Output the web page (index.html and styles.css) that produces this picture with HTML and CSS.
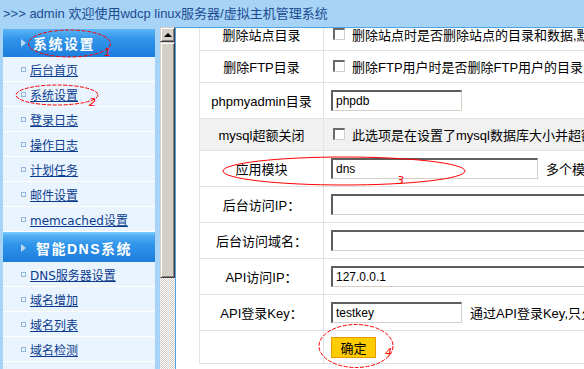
FILE: index.html
```html
<!DOCTYPE html>
<html lang="zh-CN">
<head>
<meta charset="utf-8">
<title>wdcp</title>
<link rel="stylesheet" href="styles.css">
</head>
<body>
<div class="top">&gt;&gt;&gt; admin 欢迎使用wdcp linux服务器/虚拟主机管理系统</div>
<div class="main">
  <aside class="sidebar">
    <div class="menu-group">
      <div class="menu-head"><span class="tri"></span>系统设置</div>
      <ul class="menu-list">
        <li><span class="dot"></span><a href="#">后台首页</a></li>
        <li><span class="dot"></span><a href="#">系统设置</a></li>
        <li><span class="dot"></span><a href="#">登录日志</a></li>
        <li><span class="dot"></span><a href="#">操作日志</a></li>
        <li><span class="dot"></span><a href="#">计划任务</a></li>
        <li><span class="dot"></span><a href="#">邮件设置</a></li>
        <li><span class="dot"></span><a href="#">memcached设置</a></li>
      </ul>
    </div>
    <div class="menu-group">
      <div class="menu-head"><span class="tri"></span>智能DNS系统</div>
      <ul class="menu-list">
        <li><span class="dot"></span><a href="#">DNS服务器设置</a></li>
        <li><span class="dot"></span><a href="#">域名增加</a></li>
        <li><span class="dot"></span><a href="#">域名列表</a></li>
        <li><span class="dot"></span><a href="#">域名检测</a></li>
        <li></li>
      </ul>
    </div>
  </aside>
  <div class="scrollbar">
    <div class="sb-btn"><span class="sb-arrow"></span></div>
    <div class="sb-thumb"></div>
    <div class="sb-track"></div>
  </div>
  <main class="content">
    <table class="form">
      <tr class="row-check">
        <td class="label">删除站点目录</td>
        <td class="field"><span class="check"></span><span class="hint">删除站点时是否删除站点的目录和数据,默认不删除</span></td>
      </tr>
      <tr class="row-check">
        <td class="label">删除FTP目录</td>
        <td class="field"><span class="check"></span><span class="hint">删除FTP用户时是否删除FTP用户的目录</span></td>
      </tr>
      <tr class="row-input">
        <td class="label">phpmyadmin目录</td>
        <td class="field"><input class="txt" type="text" value="phpdb"></td>
      </tr>
      <tr class="row-check hover">
        <td class="label">mysql超额关闭</td>
        <td class="field"><span class="check"></span><span class="hint">此选项是在设置了mysql数据库大小并超额后自动关闭</span></td>
      </tr>
      <tr class="row-input">
        <td class="label">应用模块</td>
        <td class="field"><input class="txt mid" type="text" value="dns"><span class="note">多个模块用逗号隔开</span></td>
      </tr>
      <tr class="row-input">
        <td class="label">后台访问IP：</td>
        <td class="field"><input class="txt wide" type="text" value=""></td>
      </tr>
      <tr class="row-input">
        <td class="label">后台访问域名：</td>
        <td class="field"><input class="txt wide" type="text" value=""></td>
      </tr>
      <tr class="row-input">
        <td class="label">API访问IP：</td>
        <td class="field"><input class="txt wide" type="text" value="127.0.0.1"></td>
      </tr>
      <tr class="row-input">
        <td class="label">API登录Key：</td>
        <td class="field"><input class="txt" type="text" value="testkey"><span class="note">通过API登录Key,只允许指定IP访问</span></td>
      </tr>
      <tr class="row-btn">
        <td class="label"></td>
        <td class="field"><button class="btn" type="button">确定</button></td>
      </tr>
    </table>
  </main>
</div>
<svg class="annot" width="584" height="369" viewBox="0 0 584 369">
  <ellipse cx="69.5" cy="43.5" rx="41" ry="13.5" class="dash"/>
  <text x="104" y="56" class="num">1</text>
  <ellipse cx="57" cy="95" rx="41" ry="10" class="dash"/>
  <text x="89" y="106" class="num">2</text>
  <ellipse cx="344" cy="171" rx="121" ry="14" class="solid"/>
  <text x="397" y="184" class="num">3</text>
  <ellipse cx="356" cy="346" rx="37" ry="21.5" class="dash"/>
  <text x="385" y="356" class="num">4</text>
</svg>
</body>
</html>
```

FILE: styles.css
```css
* { box-sizing: border-box; }
html, body { margin: 0; padding: 0; }
body {
  width: 584px;
  height: 369px;
  overflow: hidden;
  background: #a6d3f6;
  font-family: "Liberation Sans", "Noto Sans CJK SC", sans-serif;
  position: relative;
}
.top {
  height: 27px;
  line-height: 27px;
  padding-left: 3px;
  font-size: 13px;
  color: #1d4c92;
  white-space: nowrap;
}
.main {
  display: flex;
  height: 342px;
}
.sidebar {
  width: 160px;
  flex: none;
  padding: 2px 5px 0 3px;
  overflow: hidden;
}
.menu-head {
  height: 28px;
  display: flex;
  align-items: center;
  padding-left: 18px;
  background: linear-gradient(#5cb6f5 0, #3195ea 35%, #1c7ddd 100%);
  color: #fff;
  font-weight: bold;
  font-size: 14px;
  letter-spacing: 1.5px;
  white-space: nowrap;
}
.menu-group + .menu-group .menu-head {
  height: 30px;
  border-top: 2px solid #72c6fa;
  padding-left: 18px;
}
.menu-group + .menu-group .tri { margin-right: 10px; }
.tri {
  width: 0;
  height: 0;
  border-left: 5px solid #b9d9f3;
  border-top: 4.5px solid transparent;
  border-bottom: 4.5px solid transparent;
  margin-right: 7px;
}
.menu-list {
  list-style: none;
  margin: 0;
  padding: 0;
}
.menu-list li {
  height: 25px;
  border-bottom: 1px solid #ffffff;
  background: #eaf4fe;
  display: flex;
  align-items: center;
  padding-left: 18px;
  font-family: "DejaVu Sans", "Noto Sans CJK SC", sans-serif;
  font-size: 12px;
  white-space: nowrap;
}
.dot {
  width: 5px;
  height: 5px;
  border: 1px solid #94b8dd;
  margin-right: 4px;
  flex: none;
}
.menu-list a {
  color: #0b3c8e;
  text-decoration: underline;
}
.scrollbar {
  width: 15px;
  flex: none;
  display: flex;
  flex-direction: column;
}
.sb-btn, .sb-thumb {
  background: #d4d0c8;
  border: 1px solid;
  border-color: #d4d0c8 #404040 #404040 #d4d0c8;
  box-shadow: inset 1px 1px #ffffff, inset -1px -1px #808080;
}
.sb-btn {
  height: 15px;
  display: flex;
  align-items: center;
  justify-content: center;
}
.sb-arrow {
  width: 0;
  height: 0;
  border-bottom: 4px solid #000;
  border-left: 4px solid transparent;
  border-right: 4px solid transparent;
}
.sb-thumb { height: 236px; }
.sb-track {
  flex: 1;
  background: repeating-conic-gradient(#d4d0c8 0 25%, #ffffff 0 50%) 0 0 / 2px 2px;
}
.content {
  flex: 1;
  background: #ffffff;
  border-top: 1px solid #4fa3e2;
  border-left: 1px solid #4fa3e2;
  padding-left: 23px;
  overflow: hidden;
  min-width: 0;
}
.form {
  border-collapse: collapse;
  margin-top: -10px;
  width: 620px;
  font-size: 13px;
  color: #000;
}
.form td {
  border: 1px solid #e2e2e2;
  padding: 0;
  white-space: nowrap;
}
.form td.label {
  width: 124px;
  text-align: center;
}
.form td.field {
  padding-left: 7px;
}
.row-check td { height: 32px; }
.row-input td { height: 36px; }
.row-btn td { height: 33px; }
.hover td { background: #f1f1f1; }
.field {
  vertical-align: middle;
}
.check {
  display: inline-block;
  vertical-align: middle;
  width: 12px;
  height: 12px;
  margin: 0 7px 2px 2px;
  background: #fff;
  border-style: solid;
  border-width: 2px 1px 1px 2px;
  border-color: #6a6a6a #d4d0c8 #d4d0c8 #6a6a6a;
}
.hint, .note { vertical-align: middle; }
.note { margin-left: 8px; }
.txt {
  width: 131px;
  height: 21px;
  vertical-align: middle;
  margin: 0;
  padding: 0 3px;
  border-style: solid;
  border-width: 2px 1px 1px 2px;
  border-color: #5e5e5e #d4d0c8 #d4d0c8 #5e5e5e;
  font-family: "Liberation Sans", sans-serif;
  font-size: 12px;
  color: #000;
  background: #fff;
  outline: none;
}
.txt.mid { width: 207px; }
.txt.wide { width: 300px; }
.btn {
  width: 45px;
  height: 21px;
  margin: 0;
  padding: 0;
  background: #ffcc00;
  border: 1px solid #e69a00;
  font-family: "Liberation Sans", "Noto Sans CJK SC", sans-serif;
  font-size: 13px;
  color: #000;
  vertical-align: middle;
}
.annot {
  position: absolute;
  left: 0;
  top: 0;
  pointer-events: none;
}
.annot ellipse {
  fill: none;
  stroke: #ff0000;
  stroke-width: 1;
}
.annot .dash { stroke-dasharray: 4 1.5; }
.annot .num {
  fill: #ff0000;
  font-family: "DejaVu Sans", sans-serif;
  font-size: 11px;
  font-style: italic;
}
```
